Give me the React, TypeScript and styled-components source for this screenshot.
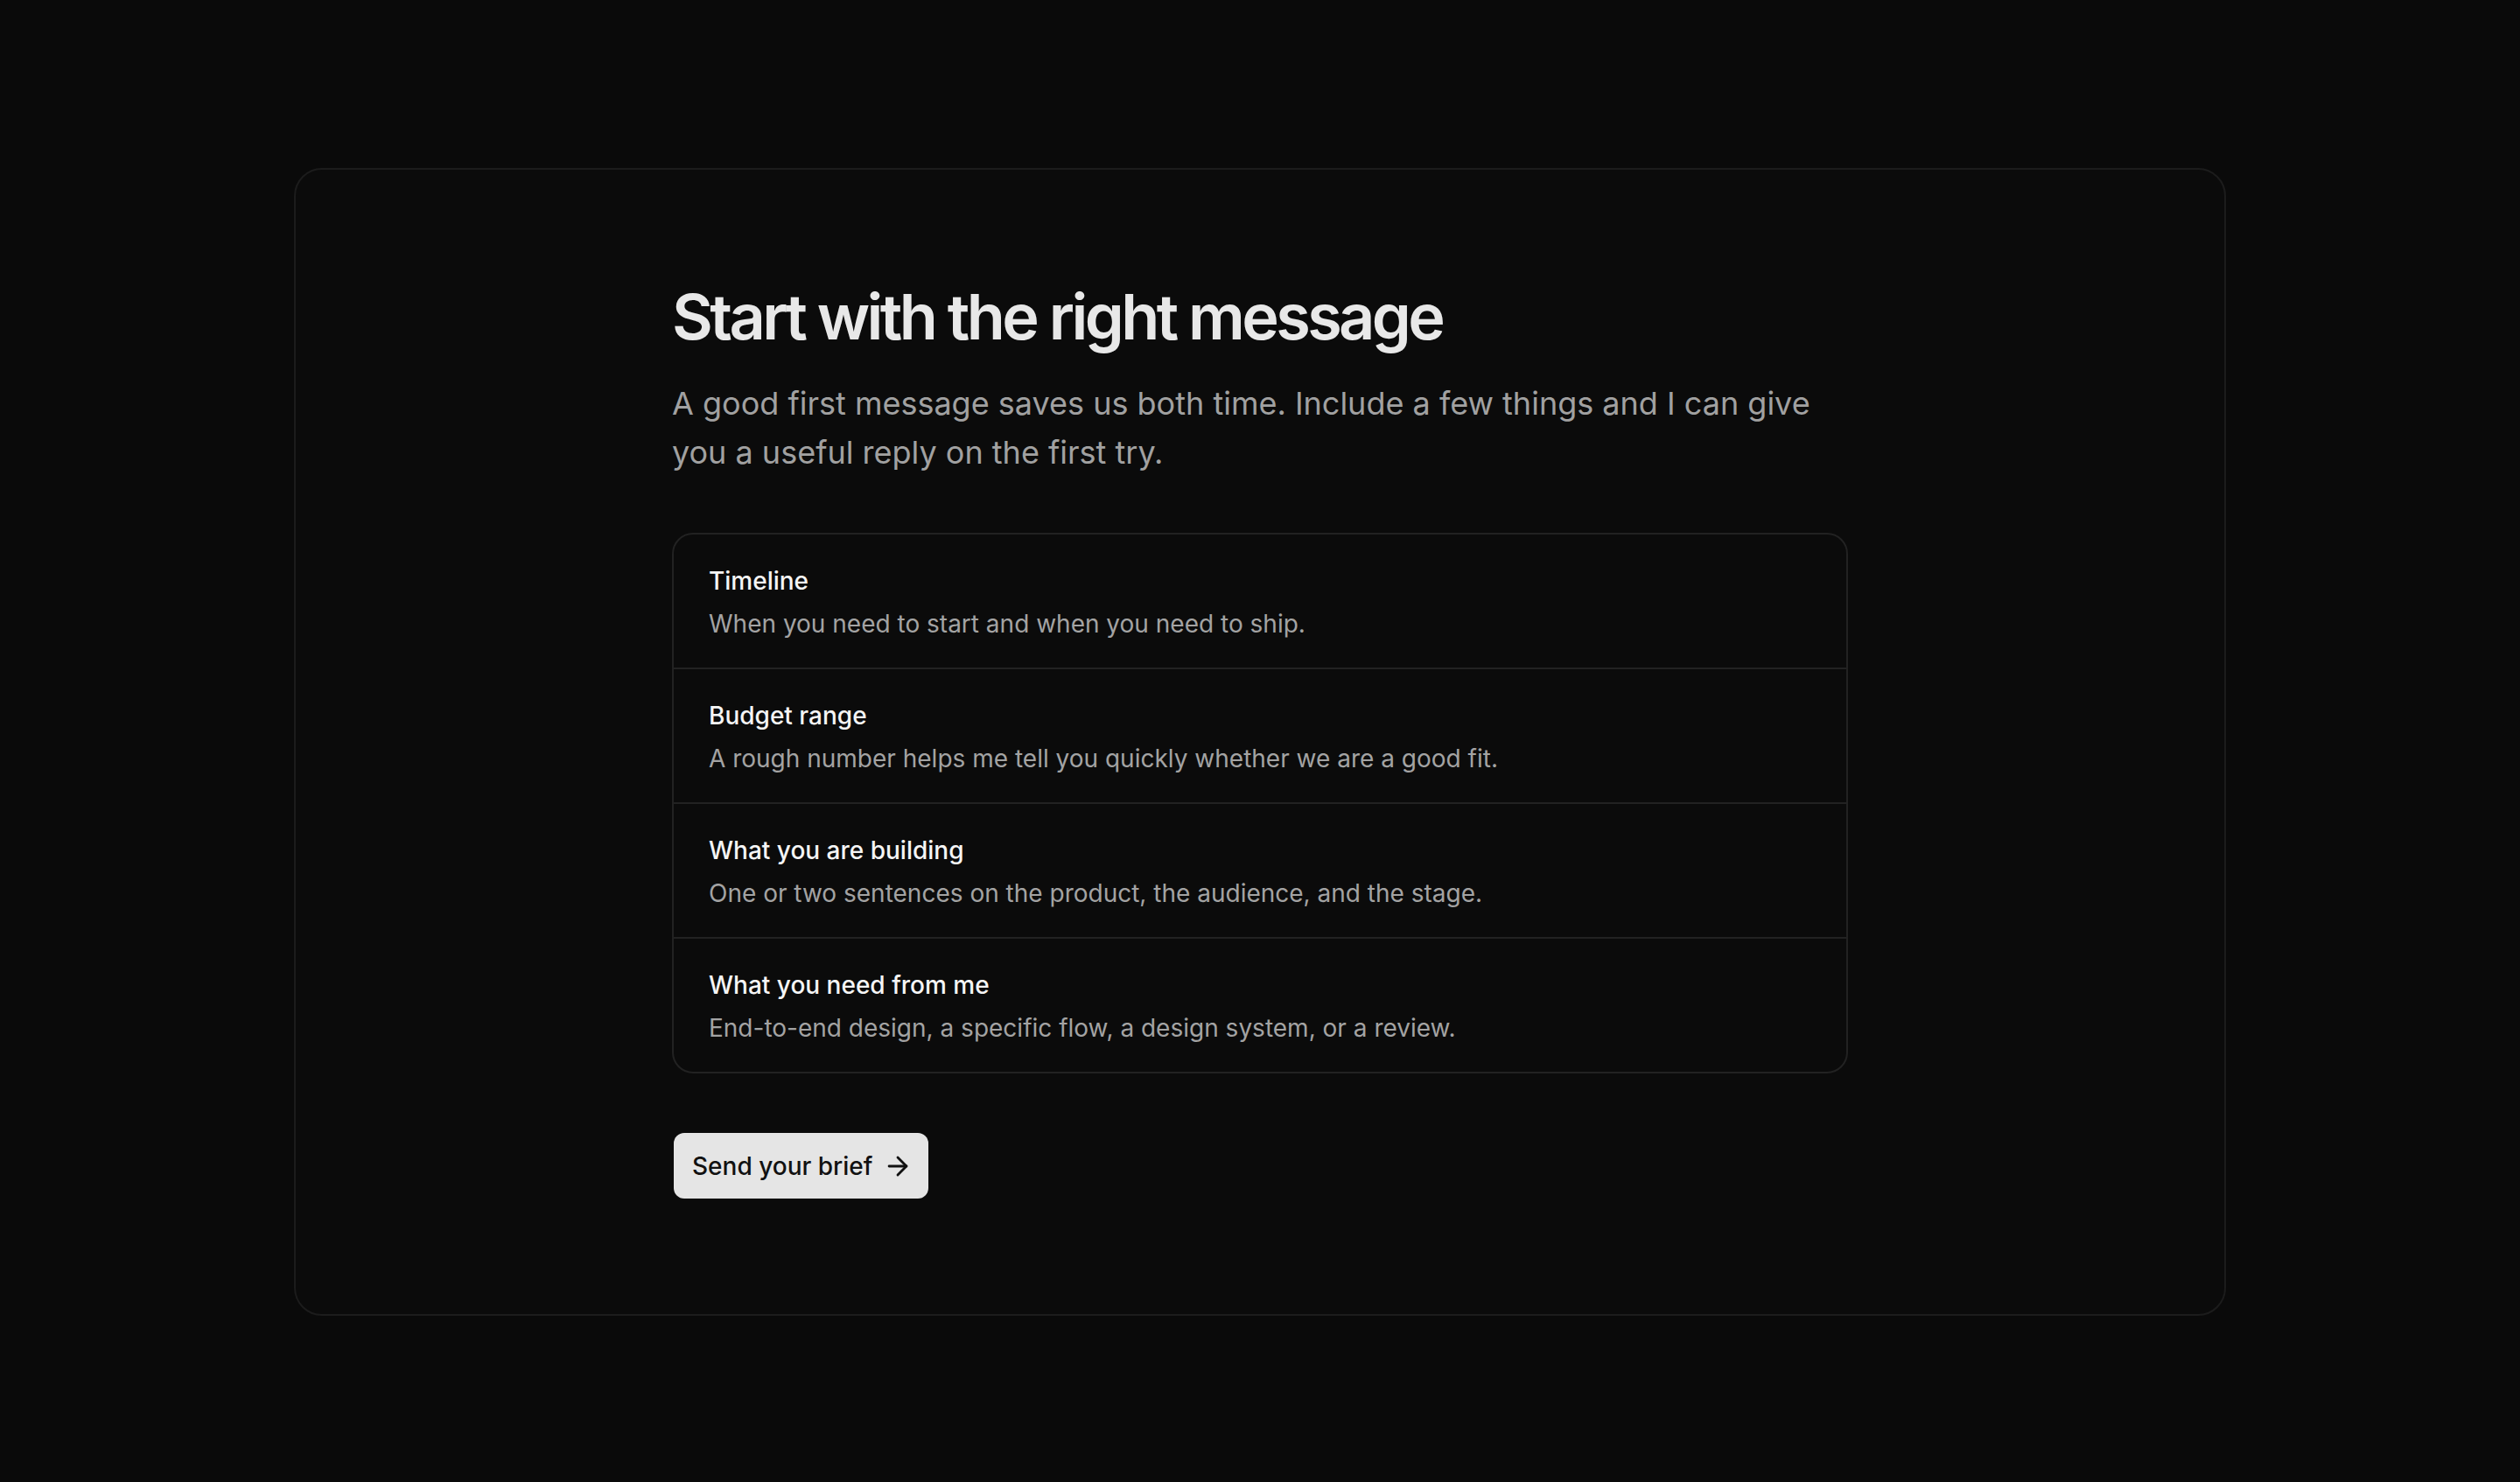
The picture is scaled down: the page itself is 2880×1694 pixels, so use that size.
import { createGlobalStyle, styled } from 'styled-components';

const GlobalStyle = createGlobalStyle`
  html, body {
    margin: 0;
    padding: 0;
    background: #0a0a0a;
  }

  body {
    font-family: Inter, "Noto Sans", sans-serif;
    -webkit-font-smoothing: antialiased;
  }
`;

const Page = styled.main`
  min-height: 100vh;
  box-sizing: border-box;
  padding: 192px 336px;
`;

const Card = styled.section`
  border: 2px solid #1c1c1c;
  border-radius: 32px;
  background: #0b0b0b;
  padding: 128px 0 132px;
  display: flex;
  justify-content: center;
`;

const Column = styled.div`
  width: 1344px;
  display: flex;
  flex-direction: column;
  align-items: flex-start;
`;

const Title = styled.h1`
  margin: 0;
  font-size: 72px;
  line-height: 1.1;
  font-weight: 600;
  letter-spacing: -0.05em;
  color: #e8e8e8;
`;

const Lead = styled.p`
  margin: 32px 0 0;
  font-size: 36px;
  line-height: 56px;
  color: #a1a1a1;
`;

const List = styled.ul`
  list-style: none;
  margin: 64px 0 0;
  padding: 0;
  align-self: stretch;
  border: 2px solid #222;
  border-radius: 24px;
  overflow: hidden;
`;

const Item = styled.li`
  padding: 33px 40px 30px;

  & + & {
    border-top: 2px solid #222;
  }
`;

const ItemTitle = styled.h3`
  margin: 0;
  font-size: 28px;
  line-height: 40px;
  font-weight: 500;
  color: #f5f5f5;
`;

const ItemText = styled.p`
  margin: 9px 0 0;
  font-size: 28px;
  line-height: 40px;
  color: #a3a3a3;
`;

const Button = styled.button`
  margin-top: 68px;
  margin-left: 2px;
  height: 75px;
  padding: 0 18px 0 21px;
  display: inline-flex;
  align-items: center;
  gap: 12px;
  border: none;
  border-radius: 12px;
  background: #e5e5e5;
  color: #111;
  font-family: inherit;
  font-size: 28px;
  font-weight: 500;
  cursor: pointer;

  &:hover {
    background: #fff;
  }
`;

const Arrow = () => (
  <svg width="34" height="34" viewBox="0 0 24 24" fill="none" stroke="currentColor" strokeWidth="2" strokeLinecap="round" strokeLinejoin="round">
    <path d="M5 12h14" />
    <path d="m12 5 7 7-7 7" />
  </svg>
);

const checklist = [
  { title: 'Timeline', text: 'When you need to start and when you need to ship.' },
  { title: 'Budget range', text: 'A rough number helps me tell you quickly whether we are a good fit.' },
  { title: 'What you are building', text: 'One or two sentences on the product, the audience, and the stage.' },
  { title: 'What you need from me', text: 'End-to-end design, a specific flow, a design system, or a review.' },
];

export default function App() {
  return (
    <>
      <GlobalStyle />
      <Page>
        <Card>
          <Column>
            <Title>Start with the right message</Title>
            <Lead>
              A good first message saves us both time. Include a few things and I can give you a useful reply on the
              first try.
            </Lead>
            <List>
              {checklist.map((item) => (
                <Item key={item.title}>
                  <ItemTitle>{item.title}</ItemTitle>
                  <ItemText>{item.text}</ItemText>
                </Item>
              ))}
            </List>
            <Button>
              Send your brief
              <Arrow />
            </Button>
          </Column>
        </Card>
      </Page>
    </>
  );
}
